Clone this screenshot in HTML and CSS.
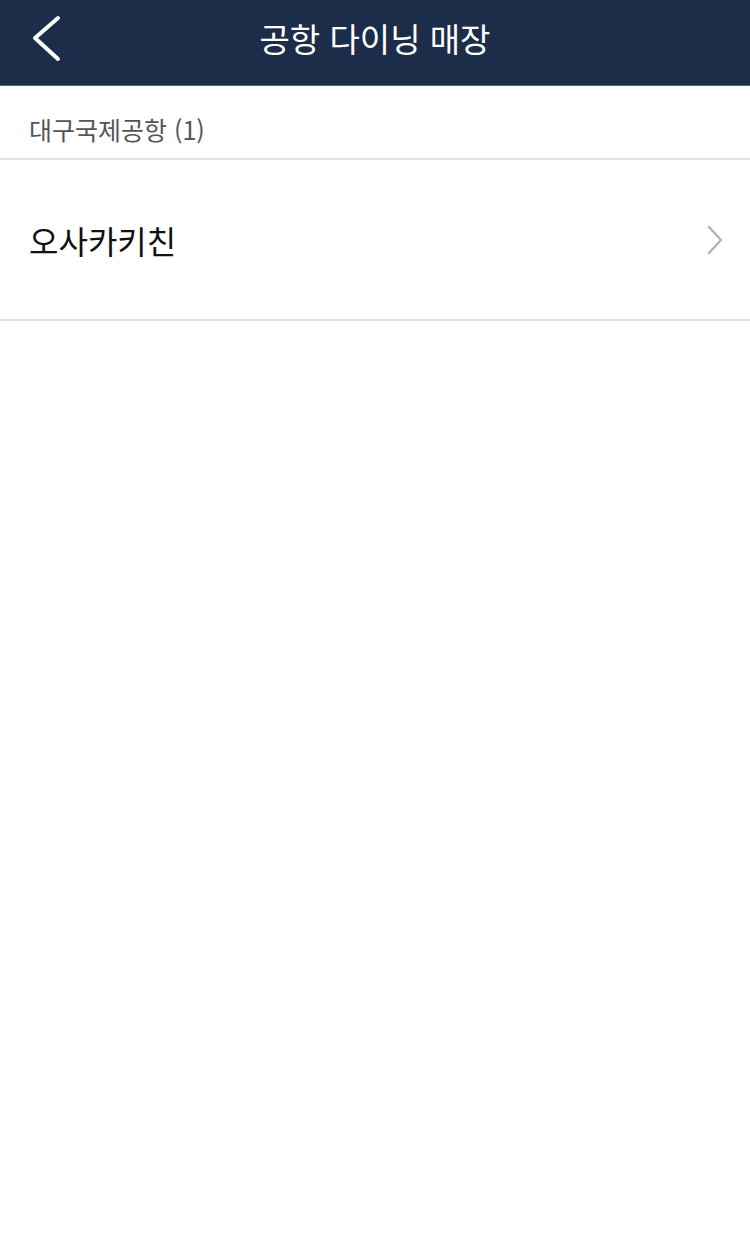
FILE: index.html
```html
<!DOCTYPE html>
<html lang="ko">
<head>
<meta charset="utf-8">
<link rel="stylesheet" href="styles.css">
</head>
<body>
<header class="topbar">
  <button class="back" aria-label="뒤로">
    <svg width="40" height="50" viewBox="0 0 40 50"><polyline points="30,5 7,25 30,46" fill="none" stroke="#fff" stroke-width="4" stroke-linecap="round" stroke-linejoin="round"/></svg>
  </button>
  <h1 class="title">공항 다이닝 매장</h1>
</header>
<section class="group">
  <div class="group-head">대구국제공항 (1)</div>
  <ul class="list">
    <li class="row">
      <span class="row-name">오사카키친</span>
      <svg class="chev" width="18" height="30" viewBox="0 0 18 30"><polyline points="3,2 15,15 3,28" fill="none" stroke="#b0b0b0" stroke-width="2.2" stroke-linecap="round" stroke-linejoin="round"/></svg>
    </li>
  </ul>
</section>
</body>
</html>
```
FILE: styles.css
```css
* { box-sizing: border-box; }
html, body { margin: 0; padding: 0; background: #fff; }
body { font-family: "Noto Sans CJK KR", "Noto Sans", sans-serif; width: 750px; min-height: 1249px; }
.topbar {
  height: 86px;
  background: #1b2d48;
  border-bottom: 1px solid #56677c;
  display: flex;
  align-items: center;
  justify-content: center;
  position: relative;
}
.back {
  position: absolute;
  left: 28px;
  top: 13px;
  background: none;
  border: 0;
  padding: 0;
  display: flex;
}
.title {
  margin: 0;
  color: #fff;
  font-size: 33px;
  font-weight: 400;
  line-height: 1;
  letter-spacing: 0;
  padding-bottom: 8px;
}
.group-head {
  height: 74px;
  display: flex;
  align-items: center;
  padding-left: 29px;
  padding-top: 14px;
  font-size: 25px;
  color: #555;
  letter-spacing: 0;
  border-bottom: 2px solid #e0e0e0;
}
.list { list-style: none; margin: 0; padding: 0; }
.row {
  height: 161px;
  display: flex;
  align-items: center;
  justify-content: space-between;
  padding: 0 26px 0 29px;
  border-bottom: 2px solid #e0e0e0;
}
.row-name {
  font-size: 32px;
  color: #111;
  letter-spacing: 0;
}
.chev { display: block; }
```
